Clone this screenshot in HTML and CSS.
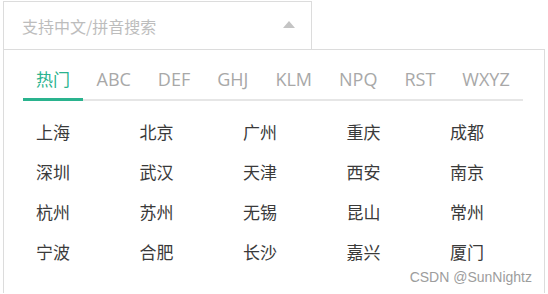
FILE: index.html
```html
<!DOCTYPE html>
<html lang="zh-CN">
<head>
  <meta charset="UTF-8" />
  <meta name="viewport" content="width=device-width, initial-scale=1.0"/>
  <title>城市选择</title>
  <link rel="stylesheet" href="styles.css">
</head>
<body>
  <div class="city-picker">
    <div class="search-box">
      <input type="text" class="search-input" placeholder="支持中文/拼音搜索">
      <span class="arrow"></span>
    </div>

    <div class="dropdown">
      <div class="tabs">
        <div class="tab active">热门</div>
        <div class="tab">ABC</div>
        <div class="tab">DEF</div>
        <div class="tab">GHJ</div>
        <div class="tab">KLM</div>
        <div class="tab">NPQ</div>
        <div class="tab">RST</div>
        <div class="tab">WXYZ</div>
      </div>

      <div class="city-list">
        <div class="city">上海</div>
        <div class="city">北京</div>
        <div class="city">广州</div>
        <div class="city">重庆</div>
        <div class="city">成都</div>
        <div class="city">深圳</div>
        <div class="city">武汉</div>
        <div class="city">天津</div>
        <div class="city">西安</div>
        <div class="city">南京</div>
        <div class="city">杭州</div>
        <div class="city">苏州</div>
        <div class="city">无锡</div>
        <div class="city">昆山</div>
        <div class="city">常州</div>
        <div class="city">宁波</div>
        <div class="city">合肥</div>
        <div class="city">长沙</div>
        <div class="city">嘉兴</div>
        <div class="city">厦门</div>
      </div>
    </div>
  </div>

  <div class="watermark">CSDN @SunNightz</div>
</body>
</html>
```

FILE: styles.css
```css
:root {
  --border: #dcdcdc;
  --accent: #2ab38e;
  --tab-text: #a8a8a8;
  --city-text: #3a3a3a;
  --placeholder: #bdbdbd;
}
* { margin: 0; padding: 0; box-sizing: border-box; }
html, body {
  width: 548px;
  height: 294px;
  overflow: hidden;
  background: #fff;
}
body {
  font-family: "Open Sans", "Noto Sans CJK SC", sans-serif;
  padding: 1px 0 0 3px;
  position: relative;
}
.search-box {
  width: 309px;
  height: 48px;
  border: 1px solid var(--border);
  border-bottom: none;
  display: flex;
  align-items: center;
  padding: 0 16px 0 18px;
}
.search-input {
  flex-grow: 1;
  border: none;
  outline: none;
  background: transparent;
  font-family: "Noto Sans CJK SC", sans-serif;
  font-size: 16px;
  color: #333;
}
.search-input::placeholder {
  color: var(--placeholder);
}
.arrow {
  width: 0;
  height: 0;
  border-left: 6.5px solid transparent;
  border-right: 6.5px solid transparent;
  border-bottom: 7px solid #c4c4c4;
  margin-top: -2px;
}
.dropdown {
  width: 542px;
  height: 244px;
  border: 1px solid var(--border);
  border-bottom: none;
}
.tabs {
  display: flex;
  margin: 12px 21px 0 19px;
  border-bottom: 2px solid #e6e6e6;
}
.tab {
  position: relative;
  flex-shrink: 0;
  white-space: nowrap;
  height: 37px;
  line-height: 34px;
  padding: 0 13.5px 3px;
  font-size: 18px;
  color: var(--tab-text);
  cursor: pointer;
}
.tab.active {
  padding: 0 13px 3px;
  color: var(--accent);
  font-family: "Noto Sans CJK SC", sans-serif;
  font-size: 17px;
}
.tab.active::after {
  content: "";
  position: absolute;
  left: 0;
  right: 0;
  bottom: -2px;
  height: 3px;
  background: var(--accent);
}
.city-list {
  display: grid;
  grid-template-columns: repeat(5, 103.5px);
  padding: 11px 0 0 32px;
}
.city {
  line-height: 40px;
  font-family: "Noto Sans CJK SC", sans-serif;
  font-size: 17px;
  color: var(--city-text);
  cursor: pointer;
}
.watermark {
  position: absolute;
  right: 16px;
  bottom: 9px;
  font-family: "Liberation Sans", sans-serif;
  font-size: 14px;
  color: #9d9d9d;
}
```
